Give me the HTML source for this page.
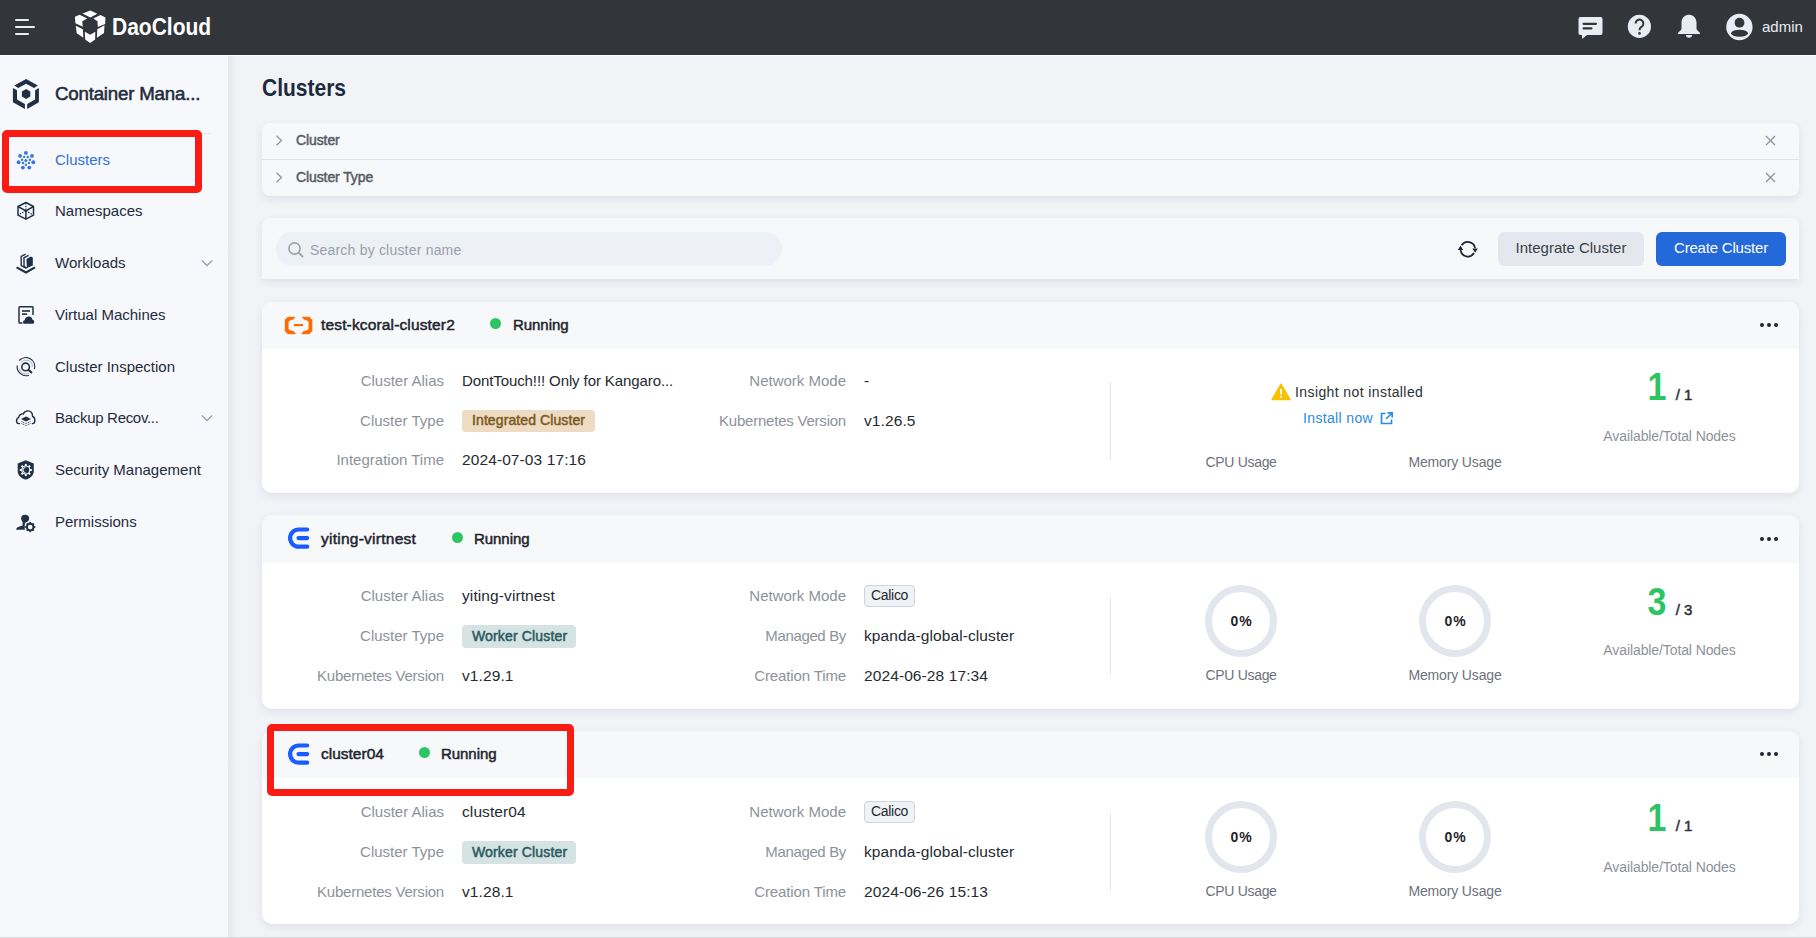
<!DOCTYPE html>
<html><head><meta charset="utf-8">
<style>
*{box-sizing:border-box;margin:0;padding:0}
html,body{width:1816px;height:938px;overflow:hidden}
body{font-family:"Liberation Sans",sans-serif;background:#f1f3f7;position:relative;color:#252a31}
.a{position:absolute;white-space:nowrap}
.t{position:absolute;white-space:nowrap;line-height:20px}
#top{left:0;top:0;width:1816px;height:55px;background:#32353a}
#topline{left:0;top:55px;width:1816px;height:1px;background:#ffffff}
#side{left:0;top:56px;width:228px;height:882px;background:#f6f8fc}
#sideshadow{left:228px;top:56px;width:10px;height:882px;background:linear-gradient(to right,#e6e8ec,#f1f3f7)}
.nav{left:55px;font-size:15px;color:#1f2c3c;line-height:18px}
.panel{left:262px;width:1536px;background:#f7f8fa;box-shadow:0 2px 6px rgba(0,0,0,0.06)}
.card{left:262px;width:1536px;background:#fff;border-radius:8px;box-shadow:0 2px 6px rgba(0,0,0,0.07);overflow:hidden}
.chead{position:absolute;left:0;top:0;width:100%;height:47px;background:#f7f8fa}
.lbl{font-size:15px;color:#8d929a;text-align:right;line-height:18px}
.val{font-size:15px;color:#252a31;line-height:18px}
</style></head><body>
<div class="a" id="top"></div><div class="a" id="topline"></div>
<!-- hamburger -->
<div class="a" style="left:15px;top:19px;width:14px;height:2px;background:#e8ecf4;border-radius:1px"></div>
<div class="a" style="left:15px;top:26px;width:20px;height:2px;background:#e8ecf4;border-radius:1px"></div>
<div class="a" style="left:15px;top:33px;width:14px;height:2px;background:#e8ecf4;border-radius:1px"></div>
<!-- logo cube -->
<svg class="a" style="left:70px;top:6px" width="40" height="42" viewBox="0 0 40 42" fill="#fff">
<polygon points="20.4,4.5 27.3,7.8 20.4,11.4 12.5,7.6"/>
<polygon points="4.9,10.7 9.6,8.7 17.2,12.5 12.3,15.2 12.8,20.8 5.4,17.2"/>
<polygon points="23.3,12.5 30.5,9 35.4,11.4 35.2,17.9 27.8,21 27.5,15.2"/>
<polygon points="5.8,19.7 12.8,23.3 13.4,31.8 6.7,27.3"/>
<polygon points="27.3,23.3 34.5,19.3 34,26.9 26.9,31.8"/>
<polygon points="14.8,25.7 20.2,28.7 25.3,25.7 25.1,33.6 20.2,36.9 15.2,33.6"/>
</svg>
<div class="a" id="logotext" style="left:112px;top:13px;font-size:24px;font-weight:bold;color:#fff;line-height:28px;transform:scaleX(0.875);transform-origin:0 0">DaoCloud</div>
<!-- right icons -->
<svg class="a" style="left:1576px;top:14px" width="28" height="28" viewBox="0 0 28 28">
<path d="M4.5,3 H24.5 A2,2 0 0 1 26.5,5 V19 A2,2 0 0 1 24.5,21 H11 L6,25 V21 H4.5 A2,2 0 0 1 2.5,19 V5 A2,2 0 0 1 4.5,3 Z" fill="#e8ecf4"/>
<rect x="6.5" y="8.7" width="14.5" height="2.2" rx="1.1" fill="#32353a"/>
<rect x="6.5" y="13.3" width="10" height="2.2" rx="1.1" fill="#32353a"/>
</svg>
<svg class="a" style="left:1626px;top:13px" width="28" height="28" viewBox="0 0 28 28">
<circle cx="13.4" cy="13.4" r="11.6" fill="#e8ecf4"/>
<path d="M9.6,10.6 A3.9,3.9 0 1 1 15.5,13.9 C14,14.8 13.5,15.4 13.5,17.2" fill="none" stroke="#32353a" stroke-width="2"/>
<circle cx="13.5" cy="20.4" r="1.3" fill="#32353a"/>
</svg>
<svg class="a" style="left:1675px;top:13px" width="28" height="28" viewBox="0 0 28 28">
<path d="M14,1.8 C9,1.8 6.5,5.5 6.5,10 V15.5 C6.5,17.5 3,19 3,20.5 V21 H25 V20.5 C25,19 21.5,17.5 21.5,15.5 V10 C21.5,5.5 19,1.8 14,1.8 Z" fill="#e8ecf4"/>
<path d="M11,22 A3,2.8 0 0 0 17,22 Z" fill="#e8ecf4"/>
</svg>
<svg class="a" style="left:1725px;top:13px" width="28" height="28" viewBox="0 0 28 28">
<circle cx="14.4" cy="14" r="13.2" fill="#e8ecf4"/>
<circle cx="14.5" cy="9.7" r="4.9" fill="#32353a"/>
<ellipse cx="14.5" cy="20.3" rx="8.5" ry="3.5" fill="#32353a"/>
</svg>
<div class="a" style="left:1762px;top:18px;font-size:15px;color:#e8ecf4;line-height:18px">admin</div>
<div class="a" id="side"></div>
<svg class="a" style="left:8px;top:74px" width="36" height="40" viewBox="0 0 36 40" fill="#1f3046">
<polygon points="18.1,4.9 29.9,11.5 26,13.9 18.1,9.8 10.2,13.9 6.4,11.5"/>
<polygon points="4.9,14.1 9,16.2 9,25.6 16.9,30.1 16.9,35 4.9,28.2"/>
<polygon points="30.9,14.1 30.9,28.2 19.2,35 19.2,30.1 27.1,25.6 27.1,16.2"/>
<polygon points="18.1,15.1 22.3,17.5 22.3,22.5 18.1,24.9 13.9,22.5 13.9,17.5"/>
</svg>
<div class="a" id="cm" style="left:55px;top:83px;font-size:18.7px;color:#1f2d3d;line-height:22px;letter-spacing:-0.2px;-webkit-text-stroke:0.55px #1f2d3d">Container Mana...</div>
<div class="a" style="left:12px;top:133px;width:199px;height:1px;background:#e3e6eb"></div>
<!-- nav icons -->
<svg class="a" style="left:12px;top:146px" width="28" height="28" viewBox="0 0 28 28" fill="#3a78e0">
<circle cx="13.9" cy="6.9" r="1.95"/><circle cx="8.1" cy="9.9" r="1.95"/><circle cx="20" cy="9.9" r="1.95"/>
<circle cx="6.6" cy="16.3" r="1.95"/><circle cx="21.3" cy="16.3" r="1.95"/><circle cx="10.9" cy="21.6" r="1.95"/><circle cx="17.3" cy="21.6" r="1.95"/>
<circle cx="12.2" cy="10.9" r="1.2"/><circle cx="15.8" cy="10.9" r="1.2"/><circle cx="10.1" cy="13.7" r="1.2"/><circle cx="17.9" cy="13.7" r="1.2"/>
<circle cx="11" cy="17" r="1.2"/><circle cx="17" cy="17" r="1.2"/><circle cx="13.9" cy="18.7" r="1.2"/><circle cx="13.9" cy="14.5" r="1.6"/>
</svg>
<svg class="a" style="left:12px;top:198px" width="28" height="28" viewBox="0 0 28 28" fill="none" stroke="#1f3046" stroke-width="1.5" stroke-linejoin="round">
<polygon points="13.9,4.5 21.5,8.5 21.5,17.2 13.9,21.2 6,17.2 6,8.5"/>
<polyline points="6,8.5 13.9,12.8 21.5,8.5"/><line x1="13.9" y1="12.8" x2="13.9" y2="21.2"/>
<line x1="13.9" y1="5" x2="13.9" y2="12.5" stroke-dasharray="1.5 1.2" stroke-width="1.2"/>
<line x1="13.9" y1="12.8" x2="6.5" y2="16.8" stroke-dasharray="1.5 1.2" stroke-width="1.2"/>
<line x1="13.9" y1="12.8" x2="21" y2="16.8" stroke-dasharray="1.5 1.2" stroke-width="1.2"/>
</svg>
<svg class="a" style="left:12px;top:250px" width="28" height="28" viewBox="0 0 28 28">
<path d="M13.6,4.2 L9.2,6.4 V15.6 L14,18.2" fill="none" stroke="#1f3046" stroke-width="1.4"/>
<path d="M16.6,5.4 L12,7.6 V16.6 L15,18.2" fill="none" stroke="#1f3046" stroke-width="1.4"/>
<path d="M14.5,9 L18.8,6.4 L20.8,7.4 V15.6 L14.8,18 Z" fill="#1f3046"/>
<path d="M4.6,17.4 L14,22.4 L23,17.4" fill="none" stroke="#1f3046" stroke-width="2.2"/>
</svg>
<svg class="a" style="left:12px;top:301px" width="28" height="28" viewBox="0 0 28 28">
<path d="M10.5,22 H7.8 Q7,22 7,21.2 V6.5 Q7,5.7 7.8,5.7 H20.2 Q21,5.7 21,6.5 V14" fill="none" stroke="#1f3046" stroke-width="1.5"/>
<rect x="10" y="9.2" width="8" height="1.6" fill="#1f3046"/><rect x="10" y="12.3" width="5.2" height="1.6" fill="#1f3046"/>
<path d="M12.4,22.8 C10.6,22.8 10.6,19.3 12.6,19.2 C13,16.4 16,14.7 18.4,15.8 C19.5,16.3 20.3,17.3 20.5,18.8 C22.7,18.9 22.9,22.8 20.6,22.8 Z" fill="#1f3046"/>
</svg>
<svg class="a" style="left:12px;top:353px" width="28" height="28" viewBox="0 0 28 28" fill="none" stroke="#1f3046">
<circle cx="13.6" cy="13.9" r="3.8" stroke-width="1.6"/>
<line x1="16.4" y1="16.7" x2="20" y2="20" stroke-width="2"/>
<path d="M7.2,7.5 A9,9 0 0 1 22.4,16.2" stroke-width="1.2"/>
<path d="M17,22.2 A9,9 0 0 1 5.2,12.5" stroke-width="1.2"/>
<path d="M8.6,9.8 A6.4,6.4 0 0 1 20.3,13.9" stroke-width="0.7" stroke="#8a94a6"/>
<path d="M17.5,19.8 A6.4,6.4 0 0 1 7.5,15.6" stroke-width="0.7" stroke="#8a94a6"/>
</svg>
<svg class="a" style="left:12px;top:404px" width="28" height="28" viewBox="0 0 28 28">
<path d="M8,19.6 H6.8 C4,19.6 3.7,14.5 6.6,13.6 C7.2,10.4 9.8,9.6 11.3,10 C12.2,7.5 14.2,6.9 16,6.9 C19,6.9 20.5,9.4 20.6,12.5 C23.5,13.2 23.7,19.4 20.6,19.6 H19.8" fill="none" stroke="#1f3046" stroke-width="1.4"/>
<polygon points="14,12.4 19,15 14,17.5 9,15" fill="#1f3046"/>
<path d="M9.5,17.4 L14,19.6 L18.5,17.4 M9.5,19.4 L14,21.6 L18.5,19.4" fill="none" stroke="#1f3046" stroke-width="0.9" stroke-dasharray="1 0.8"/>
</svg>
<svg class="a" style="left:12px;top:456px" width="28" height="28" viewBox="0 0 28 28"><path d="M13.7,4.2 L21.8,7.4 V15 C21.8,19.5 18,22.6 13.7,23.6 C9.4,22.6 5.7,19.5 5.7,15 V7.4 Z" fill="#1f3046"/><circle cx="13.8" cy="14" r="4.6" fill="#f6f8fc"/><rect x="12.850000000000001" y="7.9" width="1.9" height="2.2" fill="#f6f8fc" transform="rotate(0 13.8 14)"/><rect x="12.850000000000001" y="7.9" width="1.9" height="2.2" fill="#f6f8fc" transform="rotate(45 13.8 14)"/><rect x="12.850000000000001" y="7.9" width="1.9" height="2.2" fill="#f6f8fc" transform="rotate(90 13.8 14)"/><rect x="12.850000000000001" y="7.9" width="1.9" height="2.2" fill="#f6f8fc" transform="rotate(135 13.8 14)"/><rect x="12.850000000000001" y="7.9" width="1.9" height="2.2" fill="#f6f8fc" transform="rotate(180 13.8 14)"/><rect x="12.850000000000001" y="7.9" width="1.9" height="2.2" fill="#f6f8fc" transform="rotate(225 13.8 14)"/><rect x="12.850000000000001" y="7.9" width="1.9" height="2.2" fill="#f6f8fc" transform="rotate(270 13.8 14)"/><rect x="12.850000000000001" y="7.9" width="1.9" height="2.2" fill="#f6f8fc" transform="rotate(315 13.8 14)"/><circle cx="13.8" cy="14" r="3.4" fill="#1f3046"/><path d="M13.5,11.4 A2.6,2.6 0 0 0 13.5,16.6" fill="none" stroke="#f6f8fc" stroke-width="1"/></svg>
<svg class="a" style="left:12px;top:508px" width="28" height="28" viewBox="0 0 28 28"><ellipse cx="13.1" cy="10.5" rx="4" ry="3.7" fill="#1f3046"/><path d="M10.6,12.5 L10.6,17.4 L6.8,18.8 C5,19.4 4.2,20.3 4.2,21.8 H12.8 V15.8 L14.2,13.6 Z" fill="#1f3046"/><circle cx="18.2" cy="19.1" r="3.3" fill="none" stroke="#1f3046" stroke-width="1.9"/><rect x="17.3" y="14.000000000000002" width="1.8" height="2" fill="#1f3046" transform="rotate(0 18.2 19.1)"/><rect x="17.3" y="14.000000000000002" width="1.8" height="2" fill="#1f3046" transform="rotate(45 18.2 19.1)"/><rect x="17.3" y="14.000000000000002" width="1.8" height="2" fill="#1f3046" transform="rotate(90 18.2 19.1)"/><rect x="17.3" y="14.000000000000002" width="1.8" height="2" fill="#1f3046" transform="rotate(135 18.2 19.1)"/><rect x="17.3" y="14.000000000000002" width="1.8" height="2" fill="#1f3046" transform="rotate(180 18.2 19.1)"/><rect x="17.3" y="14.000000000000002" width="1.8" height="2" fill="#1f3046" transform="rotate(225 18.2 19.1)"/><rect x="17.3" y="14.000000000000002" width="1.8" height="2" fill="#1f3046" transform="rotate(270 18.2 19.1)"/><rect x="17.3" y="14.000000000000002" width="1.8" height="2" fill="#1f3046" transform="rotate(315 18.2 19.1)"/></svg>
<!-- nav labels -->
<div class="a nav" style="top:151px;color:#3471d6">Clusters</div>
<div class="a nav" style="top:202px">Namespaces</div>
<div class="a nav" style="top:254px">Workloads</div>
<div class="a nav" style="top:306px">Virtual Machines</div>
<div class="a nav" style="top:358px">Cluster Inspection</div>
<div class="a nav" style="top:409px;letter-spacing:-0.3px">Backup Recov...</div>
<div class="a nav" style="top:461px">Security Management</div>
<div class="a nav" style="top:513px">Permissions</div>
<svg class="a" style="left:200px;top:413px" width="14" height="10" viewBox="0 0 14 10"><polyline points="1.8,2.5 7,7.5 12.2,2.5" fill="none" stroke="#9aa1ab" stroke-width="1.3"/></svg>
<svg class="a" style="left:200px;top:258px" width="14" height="10" viewBox="0 0 14 10"><polyline points="1.8,2.5 7,7.5 12.2,2.5" fill="none" stroke="#9aa1ab" stroke-width="1.3"/></svg>
<!-- red box -->
<div class="a" style="left:2px;top:130px;width:200px;height:63px;border:7px solid #fa1b14;border-radius:5px"></div>
<div class="a" id="sideshadow"></div>

<div class="t" style="left:262px;top:74px;font-size:24px;line-height:28px;font-weight:bold;color:#1b2a3d;transform:scaleX(0.875);transform-origin:0 0">Clusters</div>
<div class="a" style="left:262px;top:123px;width:1537px;height:73px;background:#f7f8fa;border-radius:8px;box-shadow:0 3px 9px rgba(20,30,50,0.085)"></div>
<div class="a" style="left:262px;top:159px;width:1537px;height:1px;background:#dde1ea"></div>
<svg class="a" style="left:272px;top:133.0px" width="14" height="15" viewBox="0 0 14 15"><polyline points="4.5,2.8 9.5,7.5 4.5,12.2" fill="none" stroke="#8e96a4" stroke-width="1.3"/></svg>
<svg class="a" style="left:1763px;top:133.0px" width="15" height="15" viewBox="0 0 15 15"><path d="M3,3 L12,12 M12,3 L3,12" stroke="#8e96a4" stroke-width="1.4"/></svg>
<svg class="a" style="left:272px;top:169.5px" width="14" height="15" viewBox="0 0 14 15"><polyline points="4.5,2.8 9.5,7.5 4.5,12.2" fill="none" stroke="#8e96a4" stroke-width="1.3"/></svg>
<svg class="a" style="left:1763px;top:169.5px" width="15" height="15" viewBox="0 0 15 15"><path d="M3,3 L12,12 M12,3 L3,12" stroke="#8e96a4" stroke-width="1.4"/></svg>
<div class="t" style="top:130px;font-size:14px;color:#575d66;-webkit-text-stroke:0.5px #575d66;left:296px;letter-spacing:-0.1px">Cluster</div>
<div class="t" style="top:167px;font-size:14px;color:#575d66;-webkit-text-stroke:0.5px #575d66;left:296px;letter-spacing:-0.1px">Cluster Type</div>
<div class="a" style="left:262px;top:218px;width:1537px;height:61px;background:#f7f8fa;border-radius:8px 8px 0 0;box-shadow:0 3px 9px rgba(20,30,50,0.085)"></div>
<div class="a" style="left:276px;top:232px;width:506px;height:34px;background:#edf0f5;border-radius:17px"></div>
<svg class="a" style="left:286px;top:240px" width="20" height="20" viewBox="0 0 20 20"><circle cx="8.5" cy="8.5" r="5.6" fill="none" stroke="#9aa2ae" stroke-width="1.6"/><line x1="12.6" y1="12.6" x2="16.5" y2="16.5" stroke="#9aa2ae" stroke-width="1.8" stroke-linecap="round"/></svg>
<div class="t" style="top:240px;font-size:14px;color:#9aa0aa;left:310px;letter-spacing:0.2px">Search by cluster name</div>
<svg class="a" style="left:1456px;top:238px" width="24" height="24" viewBox="0 0 24 24"><path d="M5.61,7.33 A7.3,7.3 0 0 1 19.03,10.18" fill="none" stroke="#1d2633" stroke-width="1.8"/><path d="M17.99,15.07 A7.3,7.3 0 0 1 4.57,12.22" fill="none" stroke="#1d2633" stroke-width="1.8"/><polygon points="1.8,12 7.2,12 4.5,7.6" fill="#1d2633"/><polygon points="16.4,10.4 21.8,10.4 19.1,14.8" fill="#1d2633"/></svg>
<div class="a" style="left:1498px;top:232px;width:146px;height:34px;background:#e4e7ee;border-radius:6px"></div>
<div class="t" style="top:238px;font-size:15px;color:#3a3f48;left:1421px;width:300px;text-align:center;">Integrate Cluster</div>
<div class="a" style="left:1656px;top:232px;width:130px;height:34px;background:#2469d9;border-radius:6px"></div>
<div class="t" style="top:238px;font-size:15px;color:#ffffff;left:1571px;width:300px;text-align:center;letter-spacing:-0.2px">Create Cluster</div>
<div class="a" style="left:262px;top:302px;width:1537px;height:191px;background:#fff;border-radius:10px;box-shadow:0 3px 10px rgba(20,30,50,0.08);overflow:hidden"><div style="position:absolute;left:0;top:0;width:1537px;height:47px;background:#f7f8fa"></div></div>
<svg class="a" style="left:280px;top:312px" width="38" height="26" viewBox="0 0 38 26"><polygon points="15.1,5 7.8,5 5,7.8 5,19.1 7.8,21.9 15.6,21.9 13.6,19.3 9.6,18.3 8.3,16.8 8.3,9.9 9.6,8.4 13.3,7.3" fill="#ff6a00" stroke="#ff6a00" stroke-width="0.4" stroke-linejoin="round"/><polygon points="22.0,5 29.3,5 32.1,7.8 32.1,19.1 29.3,21.9 21.5,21.9 23.5,19.3 27.5,18.3 28.8,16.8 28.8,9.9 27.5,8.4 23.8,7.3" fill="#ff6a00" stroke="#ff6a00" stroke-width="0.4" stroke-linejoin="round"/><rect x="14" y="12" width="9" height="2.1" fill="#ff6a00"/></svg>
<div class="t" style="top:315px;font-size:15.5px;color:#1e2530;-webkit-text-stroke:0.5px #1e2530;left:321px;letter-spacing:0.15px">test-kcoral-cluster2</div>
<div class="a" style="left:490px;top:318px;width:11px;height:11px;border-radius:50%;background:#2dc466"></div>
<div class="t" style="top:315px;font-size:15px;color:#1e2530;-webkit-text-stroke:0.5px #1e2530;left:513px;letter-spacing:-0.05px">Running</div>
<div class="a" style="left:1760px;top:323px;width:4px;height:4px;border-radius:50%;background:#1d2530"></div>
<div class="a" style="left:1767px;top:323px;width:4px;height:4px;border-radius:50%;background:#1d2530"></div>
<div class="a" style="left:1774px;top:323px;width:4px;height:4px;border-radius:50%;background:#1d2530"></div>
<div class="t" style="top:371px;font-size:15px;color:#8d929a;right:1372px;text-align:right;">Cluster Alias</div>
<div class="t" style="top:371px;font-size:15px;color:#252a31;left:462px;letter-spacing:-0.1px">DontTouch!!! Only for Kangaro...</div>
<div class="t" style="top:411px;font-size:15px;color:#8d929a;right:1372px;text-align:right;">Cluster Type</div>
<div class="a" style="left:462px;top:410px;width:133px;height:22px;background:#eddcc2;border-radius:4px"></div>
<div class="t" style="top:410px;font-size:14px;color:#7c5a25;-webkit-text-stroke:0.5px #7c5a25;left:472px;letter-spacing:0.1px">Integrated Cluster</div>
<div class="t" style="top:450px;font-size:15px;color:#8d929a;right:1372px;text-align:right;">Integration Time</div>
<div class="t" style="top:450px;font-size:15.5px;color:#252a31;left:462px;letter-spacing:0.1px">2024-07-03 17:16</div>
<div class="t" style="top:371px;font-size:15px;color:#8d929a;right:970px;text-align:right;">Network Mode</div>
<div class="t" style="top:371px;font-size:15.5px;color:#252a31;left:864px;letter-spacing:0.1px">-</div>
<div class="t" style="top:411px;font-size:15px;color:#8d929a;right:970px;text-align:right;letter-spacing:-0.22px">Kubernetes Version</div>
<div class="t" style="top:411px;font-size:15.5px;color:#252a31;left:864px;letter-spacing:0.1px">v1.26.5</div>
<div class="t" style="top:450px;font-size:15px;color:#8d929a;right:970px;text-align:right;"></div>
<div class="a" style="left:1110px;top:382px;width:1px;height:77.5px;background:#e0e3e8"></div>
<svg class="a" style="left:1271px;top:383px" width="20" height="18" viewBox="0 0 20 18"><path d="M10,1.2 L19,16.6 H1 Z" fill="#f7c000" stroke="#f7c000" stroke-width="1.4" stroke-linejoin="round"/><rect x="9.1" y="6" width="1.8" height="5.6" fill="#fff"/><rect x="9.1" y="13" width="1.8" height="1.8" fill="#fff"/></svg>
<div class="t" style="top:382px;font-size:14px;color:#2b2f36;left:1295px;letter-spacing:0.4px">Insight not installed</div>
<div class="t" style="top:408px;font-size:14px;color:#2a8ae6;left:1303px;letter-spacing:0.35px">Install now</div>
<svg class="a" style="left:1379px;top:411px" width="15" height="15" viewBox="0 0 15 15"><path d="M6.5,2.5 H2.5 V12.5 H12.5 V8.5" fill="none" stroke="#2a8ae6" stroke-width="1.7"/><path d="M7,8 L13,2 M8.5,1.8 H13.2 V6.5" fill="none" stroke="#2a8ae6" stroke-width="1.7"/></svg>
<div class="t" style="top:452px;font-size:14px;color:#6c727c;left:1091px;width:300px;text-align:center;letter-spacing:-0.3px">CPU Usage</div>
<div class="t" style="top:452px;font-size:14px;color:#6c727c;left:1305px;width:300px;text-align:center;letter-spacing:-0.15px">Memory Usage</div>
<div class="t" style="top:378px;font-size:34px;color:#2cc465;font-weight:bold;left:1507px;width:300px;text-align:center;transform:scaleY(1.13);transform-origin:50% 21px">1</div>
<div class="t" style="top:385px;font-size:15px;color:#2b2f36;-webkit-text-stroke:0.5px #2b2f36;left:1534px;width:300px;text-align:center;">/ 1</div>
<div class="t" style="top:426px;font-size:14px;color:#8d929a;left:1519.5px;width:300px;text-align:center;letter-spacing:-0.1px">Available/Total Nodes</div>
<div class="a" style="left:262px;top:515px;width:1537px;height:194px;background:#fff;border-radius:10px;box-shadow:0 3px 10px rgba(20,30,50,0.08);overflow:hidden"><div style="position:absolute;left:0;top:0;width:1537px;height:48px;background:#f7f8fa"></div></div>
<svg class="a" style="left:286px;top:526px" width="26" height="26" viewBox="0 0 26 26"><path d="M21.2,3.5 H12.7 A8.6,8.6 0 0 0 12.7,20.7 H21.2" fill="none" stroke="#1a5cff" stroke-width="4.2" stroke-linecap="round"/><line x1="12.5" y1="12.1" x2="21.2" y2="12.1" stroke="#1a5cff" stroke-width="4.2" stroke-linecap="round"/></svg>
<div class="t" style="top:529px;font-size:15.5px;color:#1e2530;-webkit-text-stroke:0.5px #1e2530;left:321px;letter-spacing:0.25px">yiting-virtnest</div>
<div class="a" style="left:452px;top:532px;width:11px;height:11px;border-radius:50%;background:#2dc466"></div>
<div class="t" style="top:529px;font-size:15px;color:#1e2530;-webkit-text-stroke:0.5px #1e2530;left:474px;letter-spacing:-0.05px">Running</div>
<div class="a" style="left:1760px;top:537px;width:4px;height:4px;border-radius:50%;background:#1d2530"></div>
<div class="a" style="left:1767px;top:537px;width:4px;height:4px;border-radius:50%;background:#1d2530"></div>
<div class="a" style="left:1774px;top:537px;width:4px;height:4px;border-radius:50%;background:#1d2530"></div>
<div class="t" style="top:586px;font-size:15px;color:#8d929a;right:1372px;text-align:right;">Cluster Alias</div>
<div class="t" style="top:586px;font-size:15.5px;color:#252a31;left:462px;letter-spacing:0.1px">yiting-virtnest</div>
<div class="t" style="top:626px;font-size:15px;color:#8d929a;right:1372px;text-align:right;">Cluster Type</div>
<div class="a" style="left:462px;top:625px;width:114px;height:23px;background:#d5e3e3;border-radius:4px"></div>
<div class="t" style="top:626px;font-size:14px;color:#2b5a5e;-webkit-text-stroke:0.5px #2b5a5e;left:472px;letter-spacing:0.15px">Worker Cluster</div>
<div class="t" style="top:666px;font-size:15px;color:#8d929a;right:1372px;text-align:right;letter-spacing:-0.22px">Kubernetes Version</div>
<div class="t" style="top:666px;font-size:15.5px;color:#252a31;left:462px;letter-spacing:0.1px">v1.29.1</div>
<div class="t" style="top:586px;font-size:15px;color:#8d929a;right:970px;text-align:right;">Network Mode</div>
<div class="a" style="left:864px;top:585px;width:51px;height:22px;background:#f0f2f6;border:1px solid #cfd3db;border-radius:4px"></div>
<div class="t" style="top:585px;font-size:14px;color:#252a31;left:871px;letter-spacing:-0.3px">Calico</div>
<div class="t" style="top:626px;font-size:15px;color:#8d929a;right:970px;text-align:right;letter-spacing:-0.35px">Managed By</div>
<div class="t" style="top:626px;font-size:15.5px;color:#252a31;left:864px;letter-spacing:0.1px">kpanda-global-cluster</div>
<div class="t" style="top:666px;font-size:15px;color:#8d929a;right:970px;text-align:right;letter-spacing:-0.12px">Creation Time</div>
<div class="t" style="top:666px;font-size:15.5px;color:#252a31;left:864px;letter-spacing:0.1px">2024-06-28 17:34</div>
<div class="a" style="left:1110px;top:597px;width:1px;height:77.60000000000002px;background:#e0e3e8"></div>
<div class="a" style="left:1205px;top:585px;width:72px;height:72px;border-radius:50%;border:7px solid #e3e6ec"></div>
<div class="t" style="top:611px;font-size:14px;color:#1f2329;font-weight:bold;left:1091.5px;width:300px;text-align:center;letter-spacing:1px">0%</div>
<div class="t" style="top:665px;font-size:14px;color:#6c727c;left:1091px;width:300px;text-align:center;letter-spacing:-0.3px">CPU Usage</div>
<div class="a" style="left:1419px;top:585px;width:72px;height:72px;border-radius:50%;border:7px solid #e3e6ec"></div>
<div class="t" style="top:611px;font-size:14px;color:#1f2329;font-weight:bold;left:1305.5px;width:300px;text-align:center;letter-spacing:1px">0%</div>
<div class="t" style="top:665px;font-size:14px;color:#6c727c;left:1305px;width:300px;text-align:center;letter-spacing:-0.15px">Memory Usage</div>
<div class="t" style="top:593px;font-size:34px;color:#2cc465;font-weight:bold;left:1507px;width:300px;text-align:center;transform:scaleY(1.13);transform-origin:50% 21px">3</div>
<div class="t" style="top:600px;font-size:15px;color:#2b2f36;-webkit-text-stroke:0.5px #2b2f36;left:1534px;width:300px;text-align:center;">/ 3</div>
<div class="t" style="top:640px;font-size:14px;color:#8d929a;left:1519.5px;width:300px;text-align:center;letter-spacing:-0.1px">Available/Total Nodes</div>
<div class="a" style="left:262px;top:731px;width:1537px;height:193px;background:#fff;border-radius:10px;box-shadow:0 3px 10px rgba(20,30,50,0.08);overflow:hidden"><div style="position:absolute;left:0;top:0;width:1537px;height:47px;background:#f7f8fa"></div></div>
<svg class="a" style="left:286px;top:742px" width="26" height="26" viewBox="0 0 26 26"><path d="M21.2,3.5 H12.7 A8.6,8.6 0 0 0 12.7,20.7 H21.2" fill="none" stroke="#1a5cff" stroke-width="4.2" stroke-linecap="round"/><line x1="12.5" y1="12.1" x2="21.2" y2="12.1" stroke="#1a5cff" stroke-width="4.2" stroke-linecap="round"/></svg>
<div class="t" style="top:744px;font-size:15.5px;color:#1e2530;-webkit-text-stroke:0.5px #1e2530;left:321px;letter-spacing:0.0px">cluster04</div>
<div class="a" style="left:419px;top:747px;width:11px;height:11px;border-radius:50%;background:#2dc466"></div>
<div class="t" style="top:744px;font-size:15px;color:#1e2530;-webkit-text-stroke:0.5px #1e2530;left:441px;letter-spacing:-0.05px">Running</div>
<div class="a" style="left:1760px;top:752px;width:4px;height:4px;border-radius:50%;background:#1d2530"></div>
<div class="a" style="left:1767px;top:752px;width:4px;height:4px;border-radius:50%;background:#1d2530"></div>
<div class="a" style="left:1774px;top:752px;width:4px;height:4px;border-radius:50%;background:#1d2530"></div>
<div class="t" style="top:802px;font-size:15px;color:#8d929a;right:1372px;text-align:right;">Cluster Alias</div>
<div class="t" style="top:802px;font-size:15.5px;color:#252a31;left:462px;letter-spacing:0.1px">cluster04</div>
<div class="t" style="top:842px;font-size:15px;color:#8d929a;right:1372px;text-align:right;">Cluster Type</div>
<div class="a" style="left:462px;top:841.4px;width:114px;height:23px;background:#d5e3e3;border-radius:4px"></div>
<div class="t" style="top:842px;font-size:14px;color:#2b5a5e;-webkit-text-stroke:0.5px #2b5a5e;left:472px;letter-spacing:0.15px">Worker Cluster</div>
<div class="t" style="top:882px;font-size:15px;color:#8d929a;right:1372px;text-align:right;letter-spacing:-0.22px">Kubernetes Version</div>
<div class="t" style="top:882px;font-size:15.5px;color:#252a31;left:462px;letter-spacing:0.1px">v1.28.1</div>
<div class="t" style="top:802px;font-size:15px;color:#8d929a;right:970px;text-align:right;">Network Mode</div>
<div class="a" style="left:864px;top:801.4px;width:51px;height:22px;background:#f0f2f6;border:1px solid #cfd3db;border-radius:4px"></div>
<div class="t" style="top:801px;font-size:14px;color:#252a31;left:871px;letter-spacing:-0.3px">Calico</div>
<div class="t" style="top:842px;font-size:15px;color:#8d929a;right:970px;text-align:right;letter-spacing:-0.35px">Managed By</div>
<div class="t" style="top:842px;font-size:15.5px;color:#252a31;left:864px;letter-spacing:0.1px">kpanda-global-cluster</div>
<div class="t" style="top:882px;font-size:15px;color:#8d929a;right:970px;text-align:right;letter-spacing:-0.12px">Creation Time</div>
<div class="t" style="top:882px;font-size:15.5px;color:#252a31;left:864px;letter-spacing:0.1px">2024-06-26 15:13</div>
<div class="a" style="left:1110px;top:813.4px;width:1px;height:77.30000000000007px;background:#e0e3e8"></div>
<div class="a" style="left:1205px;top:801px;width:72px;height:72px;border-radius:50%;border:7px solid #e3e6ec"></div>
<div class="t" style="top:827px;font-size:14px;color:#1f2329;font-weight:bold;left:1091.5px;width:300px;text-align:center;letter-spacing:1px">0%</div>
<div class="t" style="top:881px;font-size:14px;color:#6c727c;left:1091px;width:300px;text-align:center;letter-spacing:-0.3px">CPU Usage</div>
<div class="a" style="left:1419px;top:801px;width:72px;height:72px;border-radius:50%;border:7px solid #e3e6ec"></div>
<div class="t" style="top:827px;font-size:14px;color:#1f2329;font-weight:bold;left:1305.5px;width:300px;text-align:center;letter-spacing:1px">0%</div>
<div class="t" style="top:881px;font-size:14px;color:#6c727c;left:1305px;width:300px;text-align:center;letter-spacing:-0.15px">Memory Usage</div>
<div class="t" style="top:809px;font-size:34px;color:#2cc465;font-weight:bold;left:1507px;width:300px;text-align:center;transform:scaleY(1.13);transform-origin:50% 21px">1</div>
<div class="t" style="top:816px;font-size:15px;color:#2b2f36;-webkit-text-stroke:0.5px #2b2f36;left:1534px;width:300px;text-align:center;">/ 1</div>
<div class="t" style="top:857px;font-size:14px;color:#8d929a;left:1519.5px;width:300px;text-align:center;letter-spacing:-0.1px">Available/Total Nodes</div>
<div class="a" style="left:267px;top:724px;width:307px;height:72px;border:7px solid #fa1b14;border-radius:5px"></div>
<div class="a" style="left:0;top:937px;width:1816px;height:1px;background:#d8dadd"></div>
</body></html>
